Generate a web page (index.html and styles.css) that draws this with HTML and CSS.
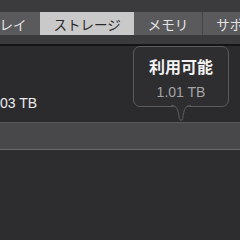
FILE: index.html
```html
<!DOCTYPE html>
<html lang="ja">
<head>
    <meta charset="UTF-8">
    <meta name="viewport" content="width=device-width, initial-scale=1.0">
    <title>ストレージ</title>
    <link rel="stylesheet" href="styles.css">
</head>
<body>
    <div class="toolbar">
        <div class="segments">
            <span class="segment">ディスプレイ</span>
            <span class="segment selected">ストレージ</span>
            <span class="segment">メモリ</span>
            <span class="segment last">サポート</span>
        </div>
    </div>

    <div class="content">
        <p class="capacity">03 TB</p>
        <div class="usage-bar"></div>

        <div class="tooltip">
            <div class="tooltip-title">利用可能</div>
            <div class="tooltip-value">1.01 TB</div>
            <svg class="tooltip-arrow" width="20" height="18" viewBox="0 0 20 18">
                <path d="M0 0.5 C5 0.5 7 3 8.3 13.5 Q10 17.5 11.7 13.5 C13 3 15 0.5 20 0.5" fill="#2e2e30" stroke="#5b5b5d" stroke-width="1"/>
            </svg>
        </div>
    </div>
</body>
</html>
```

FILE: styles.css
```css
html, body {
    margin: 0;
    padding: 0;
}
body {
    width: 240px;
    height: 240px;
    overflow: hidden;
    background: #2d2d2f;
    font-family: "Liberation Sans", "Noto Sans CJK JP", sans-serif;
}
.toolbar {
    height: 46px;
    background: #3b3b3d;
    border-bottom: 2px solid #141414;
    padding-top: 12px;
    box-sizing: border-box;
    overflow: hidden;
}
.segments {
    display: flex;
    margin-left: -67px;
    height: 23px;
    background: #5a5a5c;
    width: max-content;
}
.segment {
    display: flex;
    align-items: center;
    padding: 0 13.5px;
    font-family: "Noto Sans CJK JP", sans-serif;
    font-size: 13.5px;
    color: #e4e4e4;
    white-space: nowrap;
}
.segment.selected {
    background: #c9c9c9;
    color: #2a2a2a;
}
.segment.last {
    border-left: 1px solid #454547;
}
.content {
    position: relative;
    background: #2b2b2d;
    padding-top: 49px;
}
.capacity {
    margin: 0;
    font-size: 14px;
    line-height: 16px;
    color: #ececec;
    white-space: nowrap;
}
.usage-bar {
    margin-top: 11px;
    height: 26px;
    background: #48484a;
    border-top: 1px solid #58585a;
    border-bottom: 1px solid #6a6a6c;
}
.tooltip {
    position: absolute;
    left: 133px;
    top: 0;
    width: 96px;
    height: 61px;
    box-sizing: border-box;
    background: #2e2e30;
    border: 1px solid #5b5b5d;
    border-radius: 7px;
    display: flex;
    flex-direction: column;
    align-items: center;
    padding-top: 9px;
}
.tooltip-title {
    font-family: "Noto Sans CJK JP", sans-serif;
    font-weight: bold;
    font-size: 16px;
    line-height: 20px;
    color: #f2f2f2;
}
.tooltip-value {
    margin-top: 8px;
    font-size: 14px;
    line-height: 16px;
    color: #a4a4a6;
}
.tooltip-arrow {
    position: absolute;
    left: 37px;
    top: 58px;
}
```
